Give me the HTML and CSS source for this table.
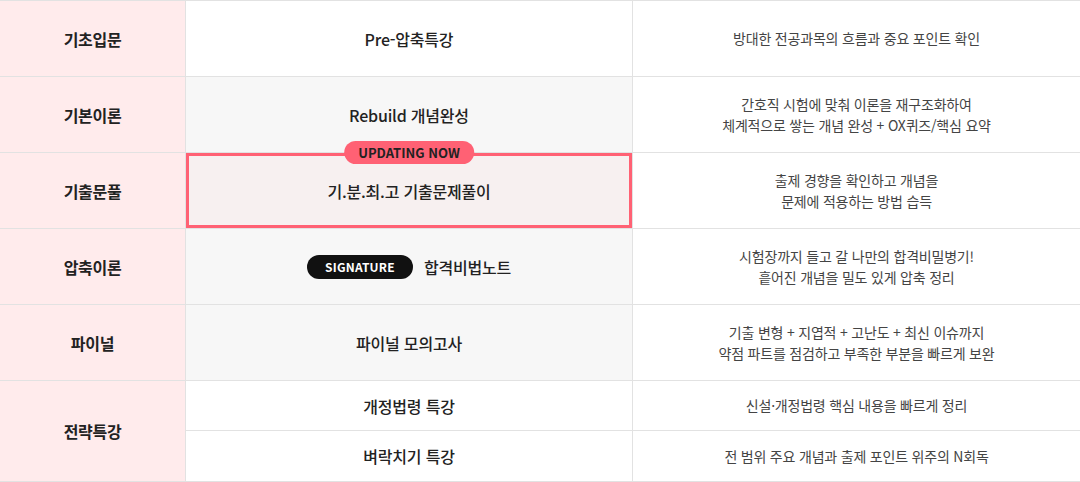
FILE: index.html
```html
<!DOCTYPE html>
<html lang="ko">
<head>
<meta charset="utf-8">
<link rel="stylesheet" href="styles.css">
</head>
<body>
<div class="curriculum">
  <div class="cell stage">기초입문</div>
  <div class="cell course">Pre-압축특강</div>
  <div class="cell desc">방대한 전공과목의 흐름과 중요 포인트 확인</div>

  <div class="cell stage">기본이론</div>
  <div class="cell course gray">Rebuild 개념완성</div>
  <div class="cell desc">간호직 시험에 맞춰 이론을 재구조화하여<br>체계적으로 쌓는 개념 완성 + OX퀴즈/핵심 요약</div>

  <div class="cell stage">기출문풀</div>
  <div class="cell course highlight"><span class="badge-updating">UPDATING NOW</span>기.분.최.고 기출문제풀이</div>
  <div class="cell desc">출제 경향을 확인하고 개념을<br>문제에 적용하는 방법 습득</div>

  <div class="cell stage">압축이론</div>
  <div class="cell course gray"><span class="badge-signature">SIGNATURE</span>합격비법노트</div>
  <div class="cell desc">시험장까지 들고 갈 나만의 합격비밀병기!<br>흩어진 개념을 밀도 있게 압축 정리</div>

  <div class="cell stage">파이널</div>
  <div class="cell course gray">파이널 모의고사</div>
  <div class="cell desc">기출 변형 + 지엽적 + 고난도 + 최신 이슈까지<br>약점 파트를 점검하고 부족한 부분을 빠르게 보완</div>

  <div class="cell stage span2">전략특강</div>
  <div class="cell course sub1">개정법령 특강</div>
  <div class="cell desc sub1">신설·개정법령 핵심 내용을 빠르게 정리</div>
  <div class="cell course sub2">벼락치기 특강</div>
  <div class="cell desc sub2">전 범위 주요 개념과 출제 포인트 위주의 N회독</div>
</div>
</body>
</html>
```

FILE: styles.css
```css
* { box-sizing: border-box; }
html, body {
  margin: 0;
  padding: 0;
  background: #fff;
}
body {
  font-family: "Noto Sans CJK KR", "Noto Sans", sans-serif;
  color: #222;
}
.curriculum {
  width: 1080px;
  display: grid;
  grid-template-columns: 185px 447px 448px;
  grid-template-rows: 76px 76px 76px 76px 76px 50px 51px;
  border-top: 1px solid #e2e2e2;
}
.cell {
  display: flex;
  align-items: center;
  justify-content: center;
  text-align: center;
  border-bottom: 1px solid #e2e2e2;
}
.stage {
  background: #ffebec;
  font-size: 16px;
  font-weight: 700;
  color: #222;
  letter-spacing: -0.3px;
}
.span2 { grid-row: span 2; }
.course {
  border-left: 1px solid #e2e2e2;
  font-size: 16px;
  font-weight: 500;
  color: #222;
  letter-spacing: -0.2px;
}
.course.gray { background: #f7f7f7; }
.desc {
  border-left: 1px solid #e2e2e2;
  font-size: 14px;
  line-height: 21px;
  color: #444;
  letter-spacing: -0.2px;
}
.highlight {
  position: relative;
  background: #f7f0f0;
  box-shadow: inset 0 0 0 3px #ff6174;
}
.badge-updating {
  position: absolute;
  top: -12px;
  left: 50%;
  transform: translateX(-50%);
  height: 23px;
  padding: 0 14px;
  border-radius: 12px;
  background: #ff6174;
  color: #222;
  font-size: 13px;
  font-weight: 700;
  letter-spacing: 0;
  line-height: 23px;
  white-space: nowrap;
  z-index: 2;
}
.badge-signature {
  display: inline-flex;
  align-items: center;
  justify-content: center;
  width: 106px;
  height: 24px;
  margin-right: 11px;
  border-radius: 12px;
  background: #111;
  color: #fff;
  font-size: 12px;
  font-weight: 700;
  letter-spacing: 0.2px;
}
```
